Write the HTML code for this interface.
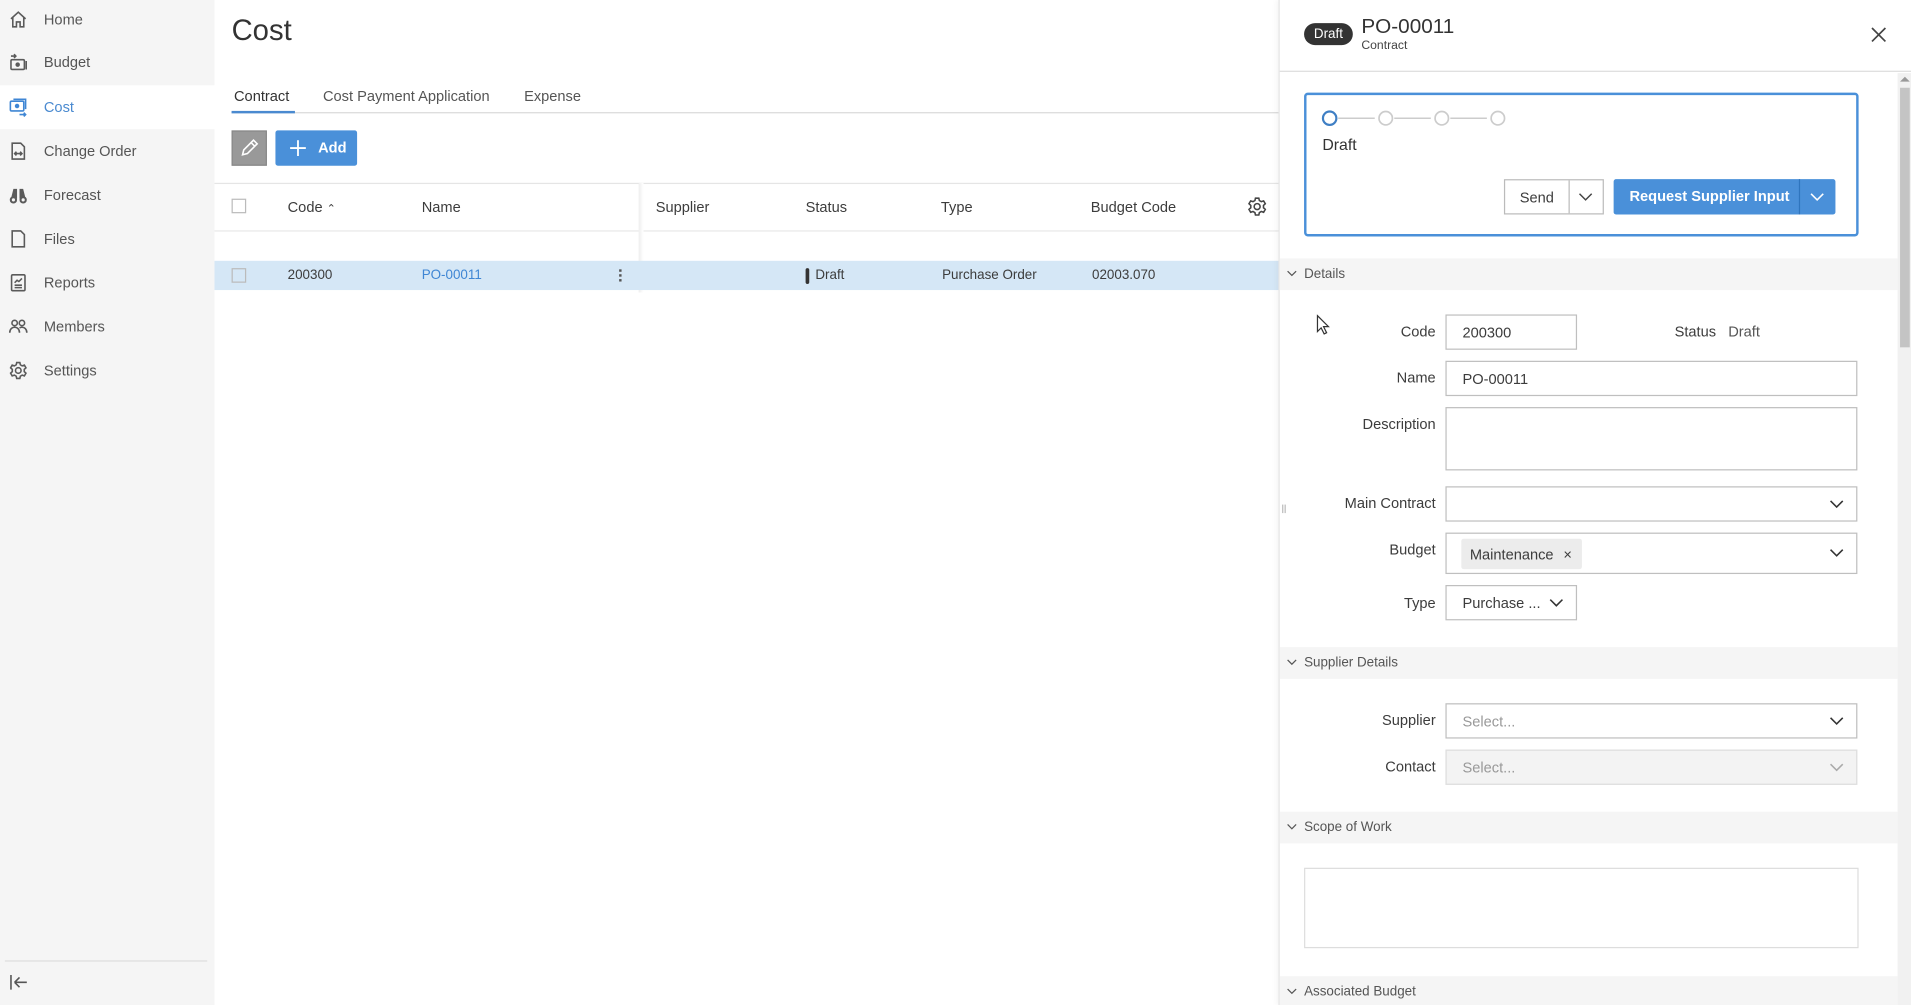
<!DOCTYPE html>
<html><head><meta charset="utf-8">
<style>
html,body{margin:0;padding:0;width:1911px;height:1005px;overflow:hidden;background:#fff}
#w{position:absolute;left:0;top:0;width:1568px;height:825px;transform:scale(1.21875);transform-origin:0 0;font-family:"Liberation Sans",sans-serif;color:#3c3c3c}
.a{position:absolute}
.sb{left:0;top:0;width:176px;height:825px;background:#f5f5f5}
.it{position:absolute;left:0;width:176px;height:36px;font-size:12px;color:#555}
.it span{position:absolute;left:36px;top:50%;transform:translateY(-50%)}
.it svg{position:absolute;left:7px;top:50%;margin-top:-8px;width:16px;height:16px;fill:none;stroke:#5a5a5a;stroke-width:1.3}
.t{font-size:12px;white-space:nowrap}
.hd{font-size:12px;color:#3c3c3c}
.cell{font-size:11px;color:#3c3c3c}
.sec{left:1050px;width:507px;height:26px;background:#f5f5f5;font-size:11px;color:#555}
.sec span{position:absolute;left:20px;top:7px}
.sec svg{position:absolute;left:6px;top:10px}
.lb{font-size:12px;color:#3c3c3c;text-align:right;width:120px;left:1058px}
.inp{border:1px solid #bfbfbf;background:#fff;box-sizing:border-box;font-size:12px;color:#3c3c3c}
.inp>span{position:absolute;left:13px;top:50%;transform:translateY(-50%)}
.chev{position:absolute;right:10px;top:50%;margin-top:-4px}
.chip{position:absolute;left:12px;top:4px;height:25px;padding:0 8px 0 7px;background:#ececec;border-radius:2px;font-size:12px;display:flex;align-items:center;gap:8px;white-space:nowrap}
</style></head><body><div id="w">

<div class="a sb"></div>
<div class="it" style="top:-2px"><svg viewBox="0 0 16 16"><path d="M2 7.5 8 2l6 5.5M3.5 6.5V14h3v-4h3v4h3V6.5"/></svg><span>Home</span></div>
<div class="it" style="top:33px"><svg viewBox="0 0 16 16"><path d="M2 3h4M4.5 1.5 6 3 4.5 4.5"/><rect x="2" y="6" width="11" height="8" rx="1"/><path d="M14.5 7v7"/><circle cx="7.5" cy="10" r="1.2" fill="#5a5a5a"/></svg><span>Budget</span></div>
<div class="it" style="top:70px;background:#fff;height:36px;color:#4a8ad0"><svg viewBox="0 0 16 16" style="stroke:#3f86d4"><rect x="1.5" y="3" width="11" height="8" rx="1"/><path d="M4 1.5h10v8"/><circle cx="7" cy="7" r="1.2" fill="#3f86d4"/><path d="M9 14h5M12.5 12.5 14 14l-1.5 1.5"/></svg><span>Cost</span></div>
<div class="it" style="top:106px"><svg viewBox="0 0 16 16"><path d="M3 1.5h7l3 3V14.5H3z"/><path d="M5 10h6M6.5 8.5 5 10l1.5 1.5M9.5 8.5 11 10l-1.5 1.5"/></svg><span>Change Order</span></div>
<div class="it" style="top:142px"><svg viewBox="0 0 16 16" style="fill:#5a5a5a;stroke:none"><circle cx="4" cy="12" r="3"/><circle cx="12" cy="12" r="3"/><path d="M2 11 4 3h3v8zM14 11 12 3H9v8z"/><circle cx="4" cy="12" r="1.3" fill="#f5f5f5"/><circle cx="12" cy="12" r="1.3" fill="#f5f5f5"/></svg><span>Forecast</span></div>
<div class="it" style="top:178px"><svg viewBox="0 0 16 16"><path d="M3 1.5h7l3 3V14.5H3z"/></svg><span>Files</span></div>
<div class="it" style="top:214px"><svg viewBox="0 0 16 16"><rect x="2.5" y="1.5" width="11" height="13" rx="1"/><path d="M5 8l2-2 1.5 1L11 4.5M5 10h6M5 12h6"/></svg><span>Reports</span></div>
<div class="it" style="top:250px"><svg viewBox="0 0 16 16"><circle cx="5" cy="5" r="2.2"/><circle cx="11" cy="5" r="2.2"/><path d="M1 13c0-3 2-4.5 4-4.5s4 1.5 4 4.5M9 9c1-.4 1.5-.5 2-.5 2 0 4 1.5 4 4.5"/></svg><span>Members</span></div>
<div class="it" style="top:286px"><svg viewBox="0 0 16 16"><circle cx="8" cy="8" r="2.3"/><path d="M6.7 1.5h2.6l.4 1.8 1.5.9 1.8-.6 1.3 2.2-1.4 1.3v1.8l1.4 1.3-1.3 2.2-1.8-.6-1.5.9-.4 1.8H6.7l-.4-1.8-1.5-.9-1.8.6-1.3-2.2L3.1 8.9V7.1L1.7 5.8 3 3.6l1.8.6 1.5-.9z"/></svg><span>Settings</span></div>
<div class="a" style="left:4px;top:788px;width:166px;height:1px;background:#ddd"></div>
<svg class="a" style="left:8px;top:799px" width="16" height="14" viewBox="0 0 16 14"><path d="M1 1v12M4 7h10M4 7l4-4M4 7l4 4" stroke="#555" stroke-width="1.3" fill="none"/></svg>

<div class="a" style="left:190px;top:12px;font-size:24px;color:#333">Cost</div>
<div class="a t" style="left:192px;top:72px;color:#333">Contract</div>
<div class="a t" style="left:265px;top:72px;color:#555">Cost Payment Application</div>
<div class="a t" style="left:430px;top:72px;color:#555">Expense</div>
<div class="a" style="left:190px;top:92px;width:859px;height:1px;background:#d9d9d9"></div>
<div class="a" style="left:190px;top:91px;width:52px;height:2px;background:#4a8ad0"></div>
<div class="a" style="left:190px;top:107px;width:29px;height:29px;background:#999;border:1px solid #888;box-sizing:border-box"><svg width="27" height="27" viewBox="0 0 27 27"><path d="M8 19l1-4 8-8 3 3-8 8zM15 9l3 3" stroke="#fff" stroke-width="1.3" fill="none"/></svg></div>
<div class="a" style="left:226px;top:107px;width:67px;height:29px;background:#4a90d9;border-radius:2px;color:#fff;font-size:12px"><svg class="a" style="left:12px;top:8px" width="13" height="13"><path d="M6.5 0v13M0 6.5h13" stroke="#fff" stroke-width="1.5"/></svg><span class="a" style="left:35px;top:7px;font-weight:bold">Add</span></div>

<div class="a" style="left:176px;top:150px;width:873px;height:1px;background:#e5e5e5"></div>
<div class="a" style="left:176px;top:189px;width:873px;height:1px;background:#e8e8e8"></div>
<div class="a" style="left:524px;top:150px;width:4px;height:90px;background:linear-gradient(90deg,#eee,#fff)"></div>
<div class="a" style="left:190px;top:163px;width:12px;height:12px;border:1px solid #bbb;box-sizing:border-box;background:#fff"></div>
<div class="a hd" style="left:236px;top:163px">Code <span style="font-size:9px">&#8963;</span></div>
<div class="a hd" style="left:346px;top:163px">Name</div>
<div class="a hd" style="left:538px;top:163px">Supplier</div>
<div class="a hd" style="left:661px;top:163px">Status</div>
<div class="a hd" style="left:772px;top:163px">Type</div>
<div class="a hd" style="left:895px;top:163px">Budget Code</div>
<svg class="a" style="left:1023px;top:161px" width="17" height="17" viewBox="0 0 16 16"><circle cx="8" cy="8" r="2.3" fill="none" stroke="#444" stroke-width="1.2"/><path d="M6.7 1.5h2.6l.4 1.8 1.5.9 1.8-.6 1.3 2.2-1.4 1.3v1.8l1.4 1.3-1.3 2.2-1.8-.6-1.5.9-.4 1.8H6.7l-.4-1.8-1.5-.9-1.8.6-1.3-2.2L3.1 8.9V7.1L1.7 5.8 3 3.6l1.8.6 1.5-.9z" fill="none" stroke="#444" stroke-width="1.2"/></svg>

<div class="a" style="left:176px;top:214px;width:873px;height:24px;background:#d5e7f6"></div>
<div class="a" style="left:190px;top:220px;width:12px;height:12px;border:1px solid #bbb;box-sizing:border-box"></div>
<div class="a cell" style="left:236px;top:220px">200300</div>
<div class="a cell" style="left:346px;top:220px;color:#3f86d4">PO-00011</div>
<div class="a" style="left:508px;top:221px;width:2px;height:2px;background:#555;box-shadow:0 4px 0 #555,0 8px 0 #555"></div>
<div class="a" style="left:661px;top:220px;width:3px;height:13px;background:#333;border-radius:2px"></div>
<div class="a cell" style="left:669px;top:220px">Draft</div>
<div class="a cell" style="left:773px;top:220px">Purchase Order</div>
<div class="a cell" style="left:896px;top:220px">02003.070</div>

<div class="a" style="left:1049px;top:0;width:519px;height:825px;background:#fff;border-left:1px solid #e3e3e3;box-shadow:-2px 0 4px rgba(0,0,0,.04)"></div>
<div class="a" style="left:1070px;top:19px;width:40px;height:18px;background:#333;border-radius:9px;color:#fff;font-size:11px;text-align:center;line-height:18px">Draft</div>
<div class="a" style="left:1117px;top:12px;font-size:17px;color:#333">PO-00011</div>
<div class="a" style="left:1117px;top:32px;font-size:10px;color:#444">Contract</div>
<svg class="a" style="left:1535px;top:22px" width="13" height="13"><path d="M1 1l11 11M12 1 1 12" stroke="#444" stroke-width="1.4"/></svg>
<div class="a" style="left:1050px;top:58px;width:518px;height:1px;background:#ddd"></div>
<div class="a" style="left:1557px;top:60px;width:11px;height:765px;background:#f1f1f1"></div>
<div class="a" style="left:1559px;top:72px;width:8px;height:213px;background:#c4c4c4"></div>
<svg class="a" style="left:1559px;top:62px" width="8" height="6"><path d="M0 5l4-4 4 4z" fill="#999"/></svg>

<div class="a" style="left:1070px;top:76px;width:455px;height:118px;border:2px solid #4a90d9;border-radius:3px;box-sizing:border-box"></div>
<svg class="a" style="left:1082px;top:88px" width="160" height="18"><path d="M16 9h30M62 9h30M108 9h30" stroke="#ccc" stroke-width="1.2"/><circle cx="9" cy="9" r="5.5" fill="#fff" stroke="#3f7fc4" stroke-width="1.8"/><circle cx="55" cy="9" r="5.5" fill="#fff" stroke="#ccc" stroke-width="1.4"/><circle cx="101" cy="9" r="5.5" fill="#fff" stroke="#ccc" stroke-width="1.4"/><circle cx="147" cy="9" r="5.5" fill="#fff" stroke="#ccc" stroke-width="1.4"/></svg>
<div class="a" style="left:1085px;top:111px;font-size:13px;color:#333">Draft</div>
<div class="a" style="left:1234px;top:147px;width:82px;height:29px;border:1px solid #bbb;box-sizing:border-box;font-size:12px"><span class="a" style="left:12px;top:7px">Send</span><div class="a" style="left:52px;top:0;width:1px;height:27px;background:#bbb"></div><svg class="a" style="left:60px;top:10px" width="12" height="8"><path d="M1 1l5 5 5-5" stroke="#444" stroke-width="1.2" fill="none"/></svg></div>
<div class="a" style="left:1324px;top:147px;width:182px;height:29px;background:#4a90d9;border-radius:2px;color:#fff;font-size:12px;font-weight:bold"><span class="a" style="left:13px;top:7px">Request Supplier Input</span><div class="a" style="left:152px;top:0;width:1px;height:29px;background:#2f75be"></div><svg class="a" style="left:161px;top:11px" width="12" height="8"><path d="M1 1l5 5 5-5" stroke="#fff" stroke-width="1.3" fill="none"/></svg></div>

<div class="a sec" style="top:212px"><svg width="8" height="5"><path d="M.5.5l3.5 3.5 3.5-3.5" stroke="#555" fill="none"/></svg><span>Details</span></div>
<div class="a lb" style="top:265px">Code</div>
<div class="a inp" style="left:1186px;top:258px;width:108px;height:29px"><span>200300</span></div>
<div class="a t" style="left:1374px;top:265px">Status</div>
<div class="a t" style="left:1418px;top:265px;color:#555">Draft</div>
<div class="a lb" style="top:303px">Name</div>
<div class="a inp" style="left:1186px;top:296px;width:338px;height:29px"><span>PO-00011</span></div>
<div class="a lb" style="top:341px">Description</div>
<div class="a inp" style="left:1186px;top:334px;width:338px;height:52px"></div>
<div class="a lb" style="top:406px">Main Contract</div>
<div class="a inp" style="left:1186px;top:399px;width:338px;height:29px"><svg class="chev" width="12" height="8"><path d="M1 1l5 5 5-5" stroke="#333" stroke-width="1.3" fill="none"/></svg></div>
<div class="a lb" style="top:444px">Budget</div>
<div class="a inp" style="left:1186px;top:437px;width:338px;height:34px"><div class="chip"><i style="font-style:normal">Maintenance</i><i style="font-style:normal;font-size:12px">×</i></div><svg class="chev" width="12" height="8"><path d="M1 1l5 5 5-5" stroke="#333" stroke-width="1.3" fill="none"/></svg></div>
<div class="a lb" style="top:488px">Type</div>
<div class="a inp" style="left:1186px;top:480px;width:108px;height:29px"><span>Purchase ...</span><svg class="chev" width="12" height="8"><path d="M1 1l5 5 5-5" stroke="#333" stroke-width="1.3" fill="none"/></svg></div>
<div class="a" style="left:1052px;top:414px;width:1px;height:7px;background:#bbb;box-shadow:2px 0 0 #bbb"></div>

<div class="a sec" style="top:531px"><svg width="8" height="5"><path d="M.5.5l3.5 3.5 3.5-3.5" stroke="#555" fill="none"/></svg><span>Supplier Details</span></div>
<div class="a lb" style="top:584px">Supplier</div>
<div class="a inp" style="left:1186px;top:577px;width:338px;height:29px;color:#999"><span>Select...</span><svg class="chev" width="12" height="8"><path d="M1 1l5 5 5-5" stroke="#333" stroke-width="1.3" fill="none"/></svg></div>
<div class="a lb" style="top:622px">Contact</div>
<div class="a inp" style="left:1186px;top:615px;width:338px;height:29px;background:#f3f3f3;border-color:#ddd;color:#999"><span>Select...</span><svg class="chev" width="12" height="8"><path d="M1 1l5 5 5-5" stroke="#aaa" stroke-width="1.3" fill="none"/></svg></div>

<div class="a sec" style="top:666px"><svg width="8" height="5"><path d="M.5.5l3.5 3.5 3.5-3.5" stroke="#555" fill="none"/></svg><span>Scope of Work</span></div>
<div class="a inp" style="left:1070px;top:712px;width:455px;height:66px;border-color:#ddd"></div>
<div class="a sec" style="top:801px;height:24px"><svg width="8" height="5"><path d="M.5.5l3.5 3.5 3.5-3.5" stroke="#555" fill="none"/></svg><span>Associated Budget</span></div>

<svg class="a" style="left:1080px;top:258px" width="12" height="17"><path d="M1 1v13l3-3 2.5 5 2-1-2.5-5h4z" fill="#fff" stroke="#333" stroke-width="1"/></svg>
</div></body></html>
